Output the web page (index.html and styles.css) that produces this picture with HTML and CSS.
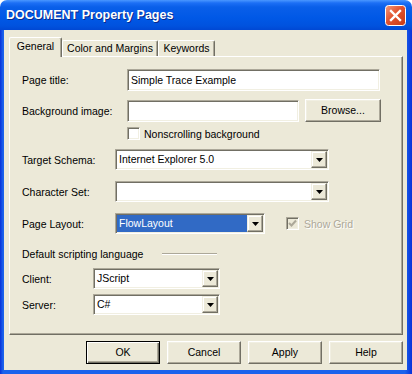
FILE: index.html
```html
<!DOCTYPE html>
<html lang="en">

<head>
    <meta charset="UTF-8">
    <meta name="viewport" content="width=device-width, initial-scale=1.0">
    <title>DOCUMENT Property Pages</title>
    <link rel="stylesheet" href="styles.css">
</head>

<body>
    <div class="window">
        <div class="titlebar">
            <span class="title">DOCUMENT Property Pages</span>
            <span class="close">
                <svg width="21" height="21" viewBox="0 0 21 21">
                    <defs>
                        <linearGradient id="cg" x1="0" y1="0" x2="1" y2="1">
                            <stop offset="0" stop-color="#f29c7e"/>
                            <stop offset="0.45" stop-color="#e2532f"/>
                            <stop offset="1" stop-color="#c73a14"/>
                        </linearGradient>
                    </defs>
                    <rect x="0.5" y="0.5" width="20" height="20" rx="3" fill="url(#cg)" stroke="#fff"/>
                    <path d="M6 6L15 15M15 6L6 15" stroke="#fff" stroke-width="2.4" stroke-linecap="square"/>
                </svg>
            </span>
        </div>
        <div class="frame">
            <div class="client">
                <div class="tabs">
                    <div class="tab active tab-general">General</div>
                    <div class="tab tab-color">Color and Margins</div>
                    <div class="tab tab-keywords">Keywords</div>
                </div>

                <div class="panel">
                    <div class="row row-title">
                        <span class="label w-wide">Page title:</span>
                        <div class="field title-field">Simple Trace Example</div>
                    </div>

                    <div class="row row-bg">
                        <span class="label w-wide">Background image:</span>
                        <div class="field bg-field"></div>
                        <div class="btn browse">Browse...</div>
                    </div>

                    <div class="row row-check">
                        <span class="checkbox"></span>
                        <span class="check-label">Nonscrolling background</span>
                    </div>

                    <div class="row row-combo">
                        <span class="label w-mid">Target Schema:</span>
                        <div class="combo combo-wide">
                            <span class="value">Internet Explorer 5.0</span>
                            <span class="arrow"><svg width="7" height="4" viewBox="0 0 7 4"><path d="M0 0h7L3.5 4z" fill="#000"/></svg></span>
                        </div>
                    </div>

                    <div class="row row-combo">
                        <span class="label w-mid">Character Set:</span>
                        <div class="combo combo-wide">
                            <span class="value"></span>
                            <span class="arrow"><svg width="7" height="4" viewBox="0 0 7 4"><path d="M0 0h7L3.5 4z" fill="#000"/></svg></span>
                        </div>
                    </div>

                    <div class="row row-combo">
                        <span class="label w-mid">Page Layout:</span>
                        <div class="combo combo-layout">
                            <span class="value selected">FlowLayout</span>
                            <span class="arrow"><svg width="7" height="4" viewBox="0 0 7 4"><path d="M0 0h7L3.5 4z" fill="#000"/></svg></span>
                        </div>
                        <span class="checkbox disabled">
                            <svg width="9" height="9" viewBox="0 0 9 9"><path d="M1 4l2.5 2.5L8 1.5" fill="none" stroke="#aca899" stroke-width="2"/></svg>
                        </span>
                        <span class="check-label disabled-text">Show Grid</span>
                    </div>

                    <div class="row row-group">
                        <span class="group-title">Default scripting language</span>
                        <span class="group-line"></span>
                    </div>

                    <div class="row row-client">
                        <span class="label w-short">Client:</span>
                        <div class="combo combo-small">
                            <span class="value">JScript</span>
                            <span class="arrow"><svg width="7" height="4" viewBox="0 0 7 4"><path d="M0 0h7L3.5 4z" fill="#000"/></svg></span>
                        </div>
                    </div>

                    <div class="row row-server">
                        <span class="label w-short">Server:</span>
                        <div class="combo combo-small">
                            <span class="value">C#</span>
                            <span class="arrow"><svg width="7" height="4" viewBox="0 0 7 4"><path d="M0 0h7L3.5 4z" fill="#000"/></svg></span>
                        </div>
                    </div>
                </div>

                <div class="buttons">
                    <div class="btn default">OK</div>
                    <div class="btn">Cancel</div>
                    <div class="btn">Apply</div>
                    <div class="btn">Help</div>
                </div>
            </div>
        </div>
    </div>
</body>

</html>
```

FILE: styles.css
```css
body {
    margin: 0;
    font-family: "Liberation Sans", Arial, sans-serif;
    font-size: 10.5px;
    color: #000;
    background-color: #fff;
}

.window {
    width: 412px;
    height: 374px;
    display: flex;
    flex-direction: column;
    border-radius: 7px 7px 0 0;
    overflow: hidden;
}

/* title bar */
.titlebar {
    height: 30px;
    flex: none;
    display: flex;
    justify-content: space-between;
    align-items: flex-start;
    padding: 5px 6px 0 6px;
    box-sizing: border-box;
    background: linear-gradient(#4a97ff 0, #1c6ff5 3px, #0a5fe9 7px, #0058e6 18px, #0052de 26px, #0048d4 30px);
}

.title {
    color: #fff;
    font-weight: bold;
    font-size: 12.5px;
    line-height: 20px;
    text-shadow: 1px 1px 0 #0a2a8a;
}

.close {
    width: 21px;
    height: 21px;
}

.close svg {
    display: block;
}

.frame {
    flex: 1;
    display: flex;
    padding: 0 5px 4px 4px;
    background: linear-gradient(to right, #0831d9 0, #1b62ec 3px, #1b62ec 405px, #0831d9 412px);
}

.client {
    flex: 1;
    background-color: #ece9d8;
    padding: 7px 4px 0 5px;
    display: flex;
    flex-direction: column;
}

/* tabs */
.tabs {
    display: flex;
    align-items: flex-end;
    height: 19px;
}

.tab {
    height: 16px;
    box-sizing: border-box;
    border: 1px solid #fff;
    border-bottom: none;
    border-right-color: #716f64;
    box-shadow: inset -1px 0 0 #aca899;
    border-radius: 2px 2px 0 0;
    text-align: center;
    line-height: 15px;
    background-color: #ece9d8;
}

.tab.active {
    height: 20px;
    margin-bottom: -1px;
    position: relative;
    z-index: 1;
    line-height: 16px;
}

.tab-general {
    width: 53px;
}

.tab-color {
    width: 96px;
}

.tab-keywords {
    width: 57px;
}

/* page */
.panel {
    height: 279px;
    box-sizing: border-box;
    border: 1px solid;
    border-color: #fff #716f64 #716f64 #fff;
    box-shadow: inset -1px -1px 0 #aca899;
    padding: 12px 0 0 12px;
}

.row {
    display: flex;
    align-items: center;
}

.label {
    flex: none;
}

.w-wide {
    width: 105px;
}

.w-mid {
    width: 93px;
}

.w-short {
    width: 71px;
}

.field {
    box-sizing: border-box;
    height: 22px;
    background-color: #fff;
    border: 1px solid;
    border-color: #aca899 #fff #fff #aca899;
    box-shadow: inset 1px 1px 0 #716f64, inset -1px -1px 0 #f1efe2;
    padding: 0 3px;
    line-height: 20px;
}

.row-title {
    height: 22px;
}

.title-field {
    width: 253px;
}

.row-bg {
    height: 23px;
    margin-top: 8px;
}

.bg-field {
    width: 172px;
}

.btn {
    box-sizing: border-box;
    width: 74px;
    height: 23px;
    line-height: 21px;
    text-align: center;
    background-color: #ece9d8;
    border: 1px solid;
    border-color: #fff #716f64 #716f64 #fff;
    box-shadow: inset -1px -1px 0 #aca899, inset 1px 1px 0 #f1efe2;
}

.btn.default {
    border-color: #000;
    box-shadow: inset 1px 1px 0 #fff, inset -1px -1px 0 #716f64, inset -2px -2px 0 #aca899;
}

.browse {
    width: 76px;
    margin-left: 6px;
}

.row-check {
    height: 13px;
    margin-top: 5px;
    padding-left: 105px;
}

.checkbox {
    width: 13px;
    height: 13px;
    flex: none;
    box-sizing: border-box;
    background-color: #fff;
    border: 1px solid;
    border-color: #aca899 #fff #fff #aca899;
    box-shadow: inset 1px 1px 0 #716f64, inset -1px -1px 0 #f1efe2;
    display: flex;
    align-items: center;
    justify-content: center;
}

.checkbox.disabled {
    background-color: #ece9d8;
    margin-left: 21px;
}

.check-label {
    margin-left: 4px;
}

.disabled-text {
    margin-left: 5px;
    color: #aca899;
    text-shadow: 1px 1px 0 #fff;
}

.row-combo {
    height: 21px;
    margin-top: 11px;
}

.row-check + .row-combo {
    margin-top: 9px;
}

.combo {
    box-sizing: border-box;
    height: 21px;
    display: flex;
    padding: 1px;
    background-color: #fff;
    border: 1px solid;
    border-color: #aca899 #fff #fff #aca899;
    box-shadow: inset 1px 1px 0 #716f64, inset -1px -1px 0 #f1efe2;
}

.combo .value {
    flex: 1;
    padding-left: 2px;
    line-height: 17px;
}

.combo .value.selected {
    background-color: #316ac5;
    color: #fff;
}

.arrow {
    width: 16px;
    box-sizing: border-box;
    background-color: #ece9d8;
    border: 1px solid;
    border-color: #f1efe2 #716f64 #716f64 #f1efe2;
    box-shadow: inset -1px -1px 0 #aca899, inset 1px 1px 0 #fff;
    display: flex;
    align-items: center;
    justify-content: center;
}

.combo-wide {
    width: 214px;
}

.combo-layout {
    width: 150px;
}

.combo-small {
    width: 127px;
}

.row-group {
    height: 14px;
    margin-top: 13px;
}

.group-title {
    width: 140px;
    flex: none;
}

.group-line {
    width: 55px;
    height: 0;
    border-top: 1px solid #aca899;
    border-bottom: 1px solid #fff;
}

.row-client {
    height: 21px;
    margin-top: 7px;
}

.row-server {
    height: 21px;
    margin-top: 5px;
}

/* bottom buttons */
.buttons {
    display: flex;
    justify-content: flex-end;
    gap: 7px;
    margin-top: 6px;
}
```
